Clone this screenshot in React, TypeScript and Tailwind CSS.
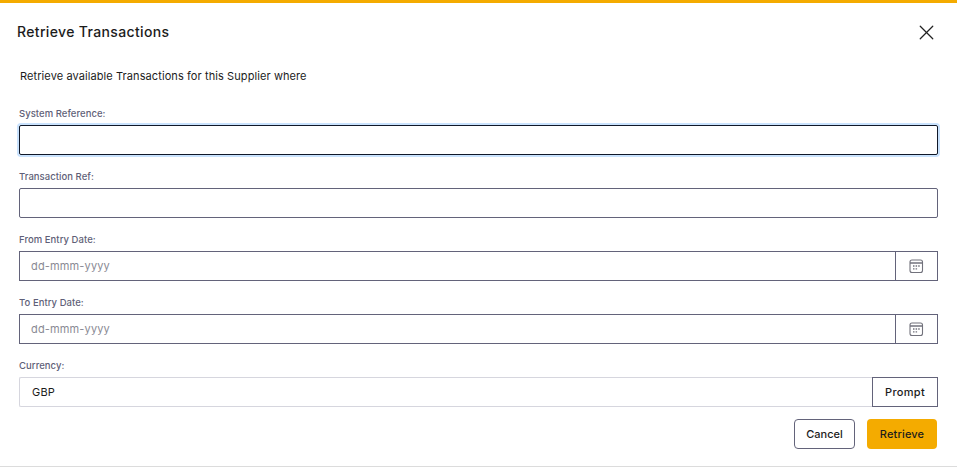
import { X } from "lucide-react";

function Label({ text }: { text: string }) {
    return <label className="block h-[14px] text-[9.5px] leading-[15px] font-medium tracking-[0.05px] text-[#5f5f78]">{text}</label>;
}

function CalendarIcon() {
    return (
        <svg width="15" height="15" viewBox="0 0 15 15" fill="none">
            <rect x="1" y="1" width="12.5" height="12.5" rx="2" stroke="#72727c" strokeWidth="1.1" />
            <path d="M1 4h12.5" stroke="#72727c" strokeWidth="1.5" />
            <path d="M4 7h1.5M6.6 7h1.5M9.2 7h1.5M4 9.8h1.5M6.6 9.8h1.5" stroke="#72727c" strokeWidth="1.3" />
        </svg>
    );
}

function DateField({ label }: { label: string }) {
    return (
        <div>
            <Label text={label} />
            <div className="mt-[5px] flex h-[30px] border border-[#63637a]">
                <div className="flex flex-1 items-center pl-[11px] text-[11px] tracking-[0.15px] text-[#8a8a94]">dd-mmm-yyyy</div>
                <div className="flex w-[42px] items-center justify-center border-l border-[#63637a]">
                    <CalendarIcon />
                </div>
            </div>
        </div>
    );
}

export default function App() {
    return (
        <div className="h-[468px] w-[957px] overflow-hidden bg-white font-['Inter','Open_Sans',sans-serif] text-[#1c1c1c]">
            <div className="h-[467px] border-b border-[#dcdcdc]">
                <div className="h-[3px] bg-[#f4ab00]" />
                <div className="flex h-[65px] items-start justify-between pl-[17px] pr-[18px]">
                    <h2 className="mt-[18px] text-[14px] font-medium tracking-[0.35px]">Retrieve Transactions</h2>
                    <X size={25} strokeWidth={1.2} className="mt-[17px] text-[#222]" />
                </div>
                <div className="px-[19px]">
                    <p className="h-[17px] pl-[1px] text-[11px] leading-[17px] tracking-[0.09px]">
                        Retrieve available Transactions for this Supplier where
                    </p>
                    <div className="mt-[21px] flex flex-col gap-[14px]">
                        <div>
                            <Label text="System Reference:" />
                            <div className="mt-[5px] h-[30px] rounded-[2px] border border-[#101828] shadow-[0_0_0_2px_#c9e2fd]" />
                        </div>
                        <div>
                            <Label text="Transaction Ref:" />
                            <div className="mt-[5px] h-[30px] rounded-[2px] border border-[#63637a]" />
                        </div>
                        <DateField label="From Entry Date:" />
                        <DateField label="To Entry Date:" />
                        <div>
                            <Label text="Currency:" />
                            <div className="mt-[5px] flex h-[30px]">
                                <div className="flex flex-1 items-center rounded-l-[2px] border border-r-0 border-[#d6d6de] pl-[12px] text-[11px] tracking-[0.2px]">
                                    GBP
                                </div>
                                <button className="w-[66px] border border-[#63637a] text-[11px] font-[450] tracking-[0.3px]">Prompt</button>
                            </div>
                        </div>
                    </div>
                    <div className="mt-[12px] flex justify-end gap-[12px] pr-[1px]">
                        <button className="h-[30px] w-[61px] rounded-[4px] border border-[#63637a] text-[11px] font-[450]">Cancel</button>
                        <button className="h-[30px] w-[70px] rounded-[4px] bg-[#f4ab00] text-[11px] font-[450] tracking-[0.15px]">Retrieve</button>
                    </div>
                </div>
            </div>
        </div>
    );
}
